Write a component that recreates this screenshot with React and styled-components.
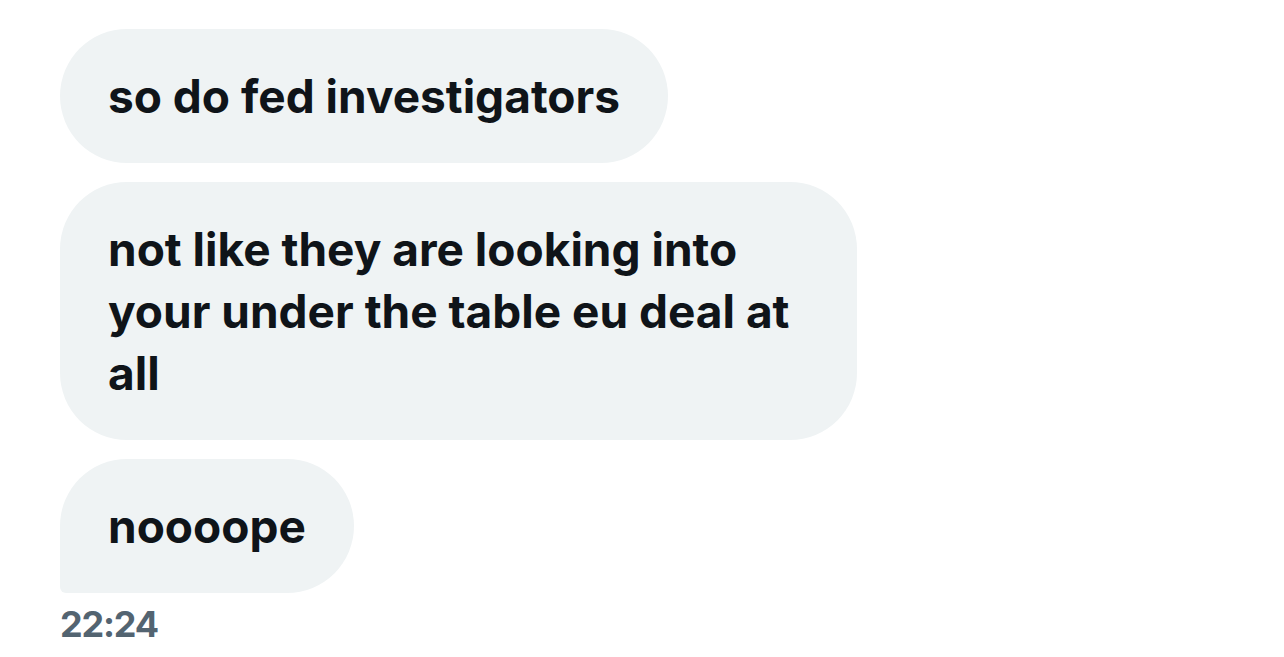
import React from "react";
import styled, { createGlobalStyle } from "styled-components";

const GlobalStyle = createGlobalStyle`
	html, body {
		margin: 0;
		padding: 0;
		background: #ffffff;
	}
	body {
		font-family: Inter, "Liberation Sans", sans-serif;
	}
`;

const messages = [
	{ id: 1, text: "so do fed investigators" },
	{ id: 2, text: "not like they are looking into your under the table eu deal at all" },
	{ id: 3, text: "noooope", last: true },
];

const App = () => {
	return (
		<>
			<GlobalStyle />
			<Thread>
				{messages.map((m) => (
					<Bubble key={m.id} $last={m.last}>
						{m.text}
					</Bubble>
				))}
				<Time>22:24</Time>
			</Thread>
		</>
	);
};

export default App;

const Thread = styled.div`
	display: flex;
	flex-direction: column;
	align-items: flex-start;
	gap: 19px;
	padding: 29px 0 0 60px;
`;
const Bubble = styled.div`
	box-sizing: border-box;
	max-width: 797px;
	padding: 36px 48px;
	background: #eff3f4;
	color: #0f1419;
	font-size: 46px;
	font-weight: 700;
	line-height: 62px;
	border-radius: 67px;
	${(p) => p.$last && "border-bottom-left-radius: 6px;"}
`;
const Time = styled.div`
	margin-top: -10px;
	color: #536471;
	font-size: 36px;
	font-weight: 700;
	letter-spacing: -1.2px;
	line-height: 44px;
`;
